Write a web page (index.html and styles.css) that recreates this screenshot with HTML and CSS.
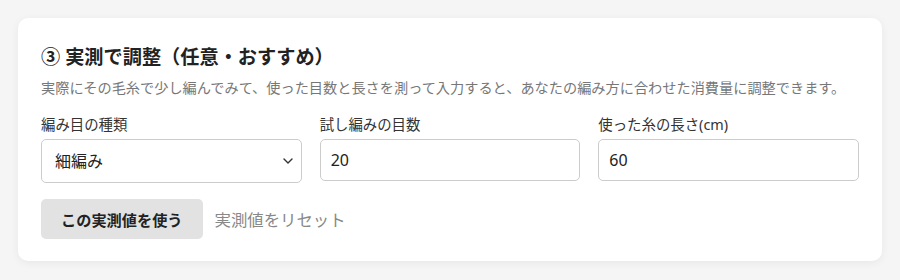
FILE: index.html
```html
<!DOCTYPE html>
<html lang="ja">
<head>
    <meta charset="UTF-8">
    <meta name="viewport" content="width=device-width, initial-scale=1.0">
    <title>実測で調整</title>
    <link rel="stylesheet" href="styles.css">
</head>
<body>
    <div class="card">
        <h2>③ 実測で調整（任意・おすすめ）</h2>
        <p class="hint">実際にその毛糸で少し編んでみて、使った目数と長さを測って入力すると、あなたの編み方に合わせた消費量に調整できます。</p>

        <div class="form-row">
            <div class="form-group">
                <label for="stitchType">編み目の種類</label>
                <div class="select-wrap">
                    <select id="stitchType">
                        <option>細編み</option>
                        <option>中長編み</option>
                        <option>長編み</option>
                    </select>
                    <svg class="chevron" width="10" height="6" viewBox="0 0 10 6">
                        <path d="M1 1 L5 5 L9 1" fill="none" stroke="#333" stroke-width="1.4" stroke-linecap="round" stroke-linejoin="round"/>
                    </svg>
                </div>
            </div>
            <div class="form-group">
                <label for="sampleCount">試し編みの目数</label>
                <input type="number" id="sampleCount" value="20">
            </div>
            <div class="form-group">
                <label for="sampleLength">使った糸の長さ(cm)</label>
                <input type="number" id="sampleLength" value="60">
            </div>
        </div>

        <div class="actions">
            <button class="apply-btn">この実測値を使う</button>
            <button class="reset-btn">実測値をリセット</button>
        </div>
    </div>
</body>
</html>
```

FILE: styles.css
```css
body {
    font-family: "Noto Sans", "Noto Sans CJK JP", sans-serif;
    background-color: #f4f5f4;
    margin: 0;
    padding: 18px;
    color: #222;
}

.card {
    background: #fff;
    border-radius: 10px;
    padding: 25px 23px 22px;
    box-shadow: 0 2px 8px rgba(0, 0, 0, 0.06);
}

h2 {
    font-size: 19.2px;
    line-height: 28px;
    margin: 0 0 6px;
    color: #222;
}

.hint {
    font-size: 14.2px;
    line-height: 22px;
    color: #777;
    margin: 0 0 16px;
}

.form-row {
    display: grid;
    grid-template-columns: repeat(3, 1fr);
    gap: 18px;
}

label {
    display: block;
    font-size: 14.4px;
    line-height: 20px;
    color: #333;
    margin-bottom: 4px;
}

input, select {
    display: block;
    width: 100%;
    height: 44px;
    padding: 0 13px;
    font-family: inherit;
    font-size: 16px;
    color: #222;
    background: #fff;
    border: 1px solid #ccc;
    border-radius: 5px;
    box-sizing: border-box;
}

select {
    appearance: none;
    -webkit-appearance: none;
    padding-right: 30px;
}

input {
    height: 42px;
    padding: 0 10px;
}

/* Anak panah dropdown */
.select-wrap {
    position: relative;
}

.chevron {
    position: absolute;
    right: 9px;
    top: 19px;
    pointer-events: none;
}

.actions {
    display: flex;
    align-items: center;
    gap: 12px;
    margin-top: 16px;
}

.apply-btn {
    background: #e2e2e2;
    color: #222;
    border: none;
    border-radius: 5px;
    padding: 0 20px;
    height: 40px;
    font-family: inherit;
    font-size: 15.2px;
    font-weight: bold;
    cursor: pointer;
}

.reset-btn {
    background: none;
    border: none;
    padding: 0;
    color: #888;
    font-family: inherit;
    font-size: 16.4px;
    cursor: pointer;
}
```
